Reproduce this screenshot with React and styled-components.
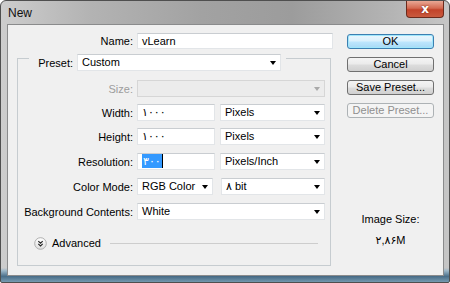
import React from 'react';
import styled, { createGlobalStyle, css } from 'styled-components';

const Global = createGlobalStyle`
  html, body { margin: 0; padding: 0; background: #ffffff; }
  body { font-family: "Liberation Sans", "DejaVu Sans", sans-serif; font-size: 11px; color: #000; }
  * { box-sizing: border-box; }
`;

const Window = styled.div`
  width: 450px;
  height: 283px;
  border: 1px solid #4f4f4f;
  border-radius: 6px 6px 2px 2px;
  display: flex;
  flex-direction: column;
  padding: 0 5px 6px 6px;
  background:
    linear-gradient(to bottom, rgba(0,0,0,0) 95%, rgba(150,180,200,0.9) 96%, rgba(60,100,130,0.9) 98%, rgba(110,150,175,0.9) 100%),
    linear-gradient(to right, #cdcdcd 0%, #b3b3b3 20%, #a2a2a2 45%, #9c9c9c 65%, #b5b5b5 88%, #c6c6c6 100%);
`;

const TitleBar = styled.div`
  height: 23px;
  display: flex;
  justify-content: space-between;
  align-items: flex-start;
`;

const Title = styled.div`
  font-size: 12px;
  line-height: 16px;
  margin: 4px 0 0 1px;
  color: #111;
`;

const CloseButton = styled.div`
  width: 38px;
  height: 17px;
  border: 1px solid #6b2a1c;
  border-top: none;
  border-radius: 0 0 4px 4px;
  background: linear-gradient(to bottom, #e9a895 0%, #d46a51 45%, #c2432a 55%, #c95a3e 100%);
  display: flex;
  align-items: center;
  justify-content: center;
  color: #fff;
  font-family: "DejaVu Sans", sans-serif;
  font-weight: bold;
  font-size: 12px;
  line-height: 12px;
  text-shadow: 0 0 2px #6a1e10;
`;

const Body = styled.div`
  flex: 1;
  display: flex;
  background: #f0f0f0;
  border: 1px solid #8a8b8c;
`;

const LeftCol = styled.div`
  width: 330px;
  padding-top: 8px;
  display: flex;
  flex-direction: column;
`;

const NameRow = styled.div`
  display: grid;
  grid-template-columns: 125px 196px;
  column-gap: 4px;
  align-items: center;
`;

const Label = styled.div`
  text-align: right;
  white-space: nowrap;
  color: ${p => (p.$disabled ? '#9d9d9d' : '#000')};
`;

const fieldBase = css`
  height: ${p => p.$h || 17}px;
  width: ${p => p.$w}px;
  background: #fff;
  border: 1px solid #e2e5e8;
  border-top-color: #c9cdd1;
  padding: 0 4px;
  line-height: ${p => (p.$h || 17) - 2}px;
  white-space: nowrap;
`;

const Input = styled.div`
  ${fieldBase}
  padding-left: 4px;
`;

const Select = styled.div`
  ${fieldBase}
  display: flex;
  justify-content: space-between;
  align-items: center;
  padding: 0 3px 0 4px;
  ${p => p.$disabled && css`
    background: #ececec;
    border-color: #d6d6d6;
  `}
`;

const Arrow = styled.span`
  width: 0;
  height: 0;
  border-left: 3.5px solid transparent;
  border-right: 3.5px solid transparent;
  border-top: 4px solid ${p => (p.$disabled ? '#a9a9a9' : '#000')};
  margin-right: 1px;
`;

const Selected = styled.span`
  background: #3399ff;
  color: #fff;
  padding: 1px 1px;
  border-right: 1px solid #000;
`;

const GroupBox = styled.div`
  margin: 9px 0 0 9px;
  width: 314px;
  border: 1px solid #c6ccd0;
  padding-bottom: 16px;
  display: flex;
  flex-direction: column;
`;

const PresetRow = styled.div`
  align-self: flex-start;
  margin: -5px 0 0 11px;
  padding: 0 5px;
  background: #f0f0f0;
  display: flex;
  align-items: center;
  gap: 4px;
`;

const PresetLabel = styled(Label)`
  width: 39px;
`;

const FieldStack = styled.div`
  margin-top: 9px;
  display: flex;
  flex-direction: column;
  gap: 7px;
`;

const FieldRow = styled.div`
  display: grid;
  grid-template-columns: 115px auto;
  column-gap: 4px;
  align-items: center;
  margin-top: ${p => (p.$loose ? 1 : 0)}px;
`;

const Pair = styled.div`
  display: flex;
  gap: ${p => p.$gap}px;
`;

const AdvancedRow = styled.div`
  margin: 17px 0 0 16px;
  width: 284px;
  display: flex;
  align-items: center;
  gap: 5px;
  height: 12px;
`;

const Rule = styled.div`
  flex: 1;
  height: 1px;
  background: #cdcdcd;
  margin-left: 4px;
`;

const RightCol = styled.div`
  flex: 1;
  display: flex;
  flex-direction: column;
  align-items: center;
  padding-top: 9px;
`;

const ButtonStack = styled.div`
  display: flex;
  flex-direction: column;
  gap: 8px;
`;

const Button = styled.div`
  width: 87px;
  height: 15px;
  border: 1px solid #707070;
  border-radius: 3px;
  background: linear-gradient(to bottom, #f4f4f4 0%, #ebebeb 48%, #dddddd 52%, #d0d0d0 100%);
  text-align: center;
  line-height: 13px;
  color: #000;
  ${p => p.$default && css`
    border-color: #3c7fb1;
    background: linear-gradient(to bottom, #eaf6fd 0%, #d9f0fc 48%, #bee6fd 52%, #a7d9f5 100%);
    box-shadow: inset 0 0 0 1px #9fe6fb;
  `}
  ${p => p.$disabled && css`
    border-color: #adb2b5;
    background: #f4f4f4;
    color: #8f8f8f;
  `}
`;

const ImageSize = styled.div`
  margin-top: 94px;
  text-align: center;
  line-height: 14px;
  display: flex;
  flex-direction: column;
  gap: 7px;
`;

const AdvancedIcon = () => (
  <svg width="13" height="13" viewBox="0 0 13 13">
    <defs>
      <linearGradient id="advg" x1="0" y1="0" x2="0" y2="1">
        <stop offset="0" stopColor="#ffffff" />
        <stop offset="1" stopColor="#dedede" />
      </linearGradient>
    </defs>
    <circle cx="6.5" cy="6.5" r="5.8" fill="url(#advg)" stroke="#a7a7a7" strokeWidth="0.9" />
    <path d="M4.3 4.2 L6.5 6.2 L8.7 4.2 M4.3 6.9 L6.5 8.9 L8.7 6.9" fill="none" stroke="#222" strokeWidth="1.1" />
  </svg>
);

export default function App() {
  return (
    <>
      <Global />
      <Window>
        <TitleBar>
          <Title>New</Title>
          <CloseButton>x</CloseButton>
        </TitleBar>
        <Body>
          <LeftCol>
            <NameRow>
              <Label>Name:</Label>
              <Input $w={196} $h={16}>vLearn</Input>
            </NameRow>
            <GroupBox>
              <PresetRow>
                <PresetLabel>Preset:</PresetLabel>
                <Select $w={204}>Custom<Arrow /></Select>
              </PresetRow>
              <FieldStack>
                <FieldRow>
                  <Label $disabled>Size:</Label>
                  <Select $w={188} $disabled><span /><Arrow $disabled /></Select>
                </FieldRow>
                <FieldRow>
                  <Label>Width:</Label>
                  <Pair $gap={5}>
                    <Input $w={78}>۱۰۰۰</Input>
                    <Select $w={105}>Pixels<Arrow /></Select>
                  </Pair>
                </FieldRow>
                <FieldRow>
                  <Label>Height:</Label>
                  <Pair $gap={5}>
                    <Input $w={78}>۱۰۰۰</Input>
                    <Select $w={105}>Pixels<Arrow /></Select>
                  </Pair>
                </FieldRow>
                <FieldRow $loose>
                  <Label>Resolution:</Label>
                  <Pair $gap={5}>
                    <Input $w={78}><Selected>۳۰۰</Selected></Input>
                    <Select $w={105}>Pixels/Inch<Arrow /></Select>
                  </Pair>
                </FieldRow>
                <FieldRow $loose>
                  <Label>Color Mode:</Label>
                  <Pair $gap={8}>
                    <Select $w={76}>RGB Color<Arrow /></Select>
                    <Select $w={104}>۸ bit<Arrow /></Select>
                  </Pair>
                </FieldRow>
                <FieldRow $loose>
                  <Label>Background Contents:</Label>
                  <Select $w={188}>White<Arrow /></Select>
                </FieldRow>
              </FieldStack>
              <AdvancedRow>
                <AdvancedIcon />
                <span>Advanced</span>
                <Rule />
              </AdvancedRow>
            </GroupBox>
          </LeftCol>
          <RightCol>
            <ButtonStack>
              <Button $default>OK</Button>
              <Button>Cancel</Button>
              <Button>Save Preset...</Button>
              <Button $disabled>Delete Preset...</Button>
            </ButtonStack>
            <ImageSize>
              <div>Image Size:</div>
              <div>۲,۸۶M</div>
            </ImageSize>
          </RightCol>
        </Body>
      </Window>
    </>
  );
}
